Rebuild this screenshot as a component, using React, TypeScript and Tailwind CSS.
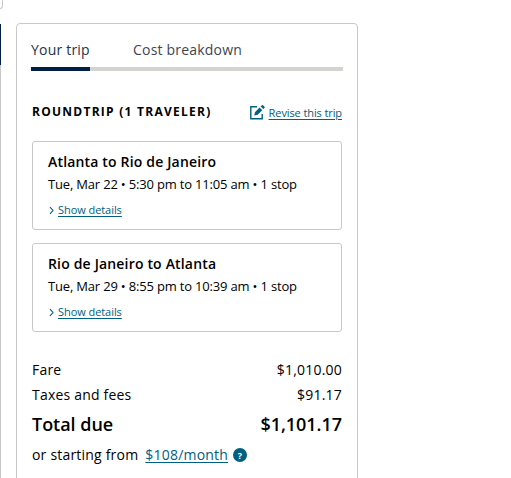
interface Trip {
  route: string;
  schedule: string;
}

const trips: Trip[] = [
  { route: "Atlanta to Rio de Janeiro", schedule: "Tue, Mar 22 • 5:30 pm to 11:05 am • 1 stop" },
  { route: "Rio de Janeiro to Atlanta", schedule: "Tue, Mar 29 • 8:55 pm to 10:39 am • 1 stop" },
];

const charges = [
  { label: "Fare", amount: "$1,010.00" },
  { label: "Taxes and fees", amount: "$91.17" },
];

const EditIcon = () => (
  <svg width="15" height="15" viewBox="0 0 15 15" fill="none">
    <path d="M7 1.7H.8V13.7H12.2V9" stroke="#00607f" strokeWidth="1.4" />
    <path d="M4.2 10.6L5.1 7L9.6 2.5L12.3 5.2L7.7 9.7Z" fill="#00607f" />
    <path d="M10.7 1.5L11.9 .3Q12.5-.2 13 .3L14.5 1.8Q15 2.3 14.5 2.9L13.3 4.1Z" fill="#00607f" />
  </svg>
);

const TripCard = ({ trip }: { trip: Trip }) => (
  <section className="h-[89px] rounded-[3px] border border-[#c9c9c9] pl-[15px] pt-[8px]">
    <h3 className="h-[23px] whitespace-nowrap text-[14px] font-semibold leading-[23px] tracking-[0.17px]">
      {trip.route}
    </h3>
    <p className="h-[23px] whitespace-nowrap text-[13px] leading-[23px] tracking-[-0.18px]">{trip.schedule}</p>
    <button className="mt-[4px] flex h-[20px] items-center text-[11px] leading-[20px] tracking-[-0.06px] text-[#00607f]">
      <svg width="10" height="9" viewBox="0 0 10 9" fill="none">
        <path d="M2 1.2L5 4.5L2 7.8" stroke="#00607f" strokeWidth="1.1" />
      </svg>
      <span className="underline underline-offset-2">Show details</span>
    </button>
  </section>
);

export default function App() {
  return (
    <div className="flex h-[478px] w-[511px] overflow-hidden bg-white font-['Open_Sans','Noto_Sans',sans-serif] text-black">
      {/* Right edge of the neighbouring column */}
      <div className="mr-[13px] flex w-[3px] shrink-0 flex-col">
        <div className="h-[9px] rounded-br-[4px] border-b border-r border-[#c9c9c9]" />
        <div className="mt-[15px] h-[41px] w-px bg-[#021f43]" />
        <div className="w-px flex-1 bg-[#c9c9c9]" />
      </div>

      <aside className="mt-[23px] h-[480px] w-[342px] shrink-0 rounded-[4px] border border-[#c9c9c9] px-[14px] pt-[11px]">
        <nav className="flex h-[36px] w-[312px] border-b-4 border-[#d3d4cf] text-[14px] leading-[30px] tracking-[0.2px] text-[#40464f]">
          <button className="h-[36px] w-[59px] whitespace-nowrap border-b-4 border-[#021f43] pb-[2px] text-left text-[#243348]">
            Your trip
          </button>
          <button className="ml-[43px] h-[32px] whitespace-nowrap pb-[2px]">Cost breakdown</button>
        </nav>

        <div className="ml-px w-[310px]">
          <header className="mt-[29px] flex h-[24px] items-center justify-between">
            <h2 className="whitespace-nowrap text-[12px] font-bold tracking-[1.26px]">ROUNDTRIP (1 TRAVELER)</h2>
            <button className="flex items-center gap-[4px] text-[11px] text-[#00607f]">
              <EditIcon />
              <span className="mt-[2px] whitespace-nowrap tracking-[-0.1px] underline underline-offset-2">
                Revise this trip
              </span>
            </button>
          </header>

          <div className="mt-[17px] flex flex-col gap-[13px]">
            {trips.map((trip) => (
              <TripCard key={trip.route} trip={trip} />
            ))}
          </div>

          <dl className="mt-[25px] text-[14px] leading-[25px] tracking-[0.2px]">
            {charges.map((charge) => (
              <div key={charge.label} className="flex h-[25px] justify-between">
                <dt>{charge.label}</dt>
                <dd>{charge.amount}</dd>
              </div>
            ))}
            <div className="flex h-[34px] justify-between text-[18px] font-semibold leading-[34px] tracking-[-0.03px]">
              <dt>Total due</dt>
              <dd>$1,101.17</dd>
            </div>
          </dl>

          <div className="flex h-[27px] items-center whitespace-nowrap text-[14px] leading-[27px] tracking-[0.2px]">
            <span>or starting from</span>
            <span className="ml-[7px] text-[#00607f] underline underline-offset-2">$108/month</span>
            <span className="ml-[5px] mt-px flex size-[14px] items-center justify-center rounded-full bg-[#00607f] text-[9px] font-bold leading-none tracking-normal text-white">
              ?
            </span>
          </div>
        </div>
      </aside>
    </div>
  );
}
